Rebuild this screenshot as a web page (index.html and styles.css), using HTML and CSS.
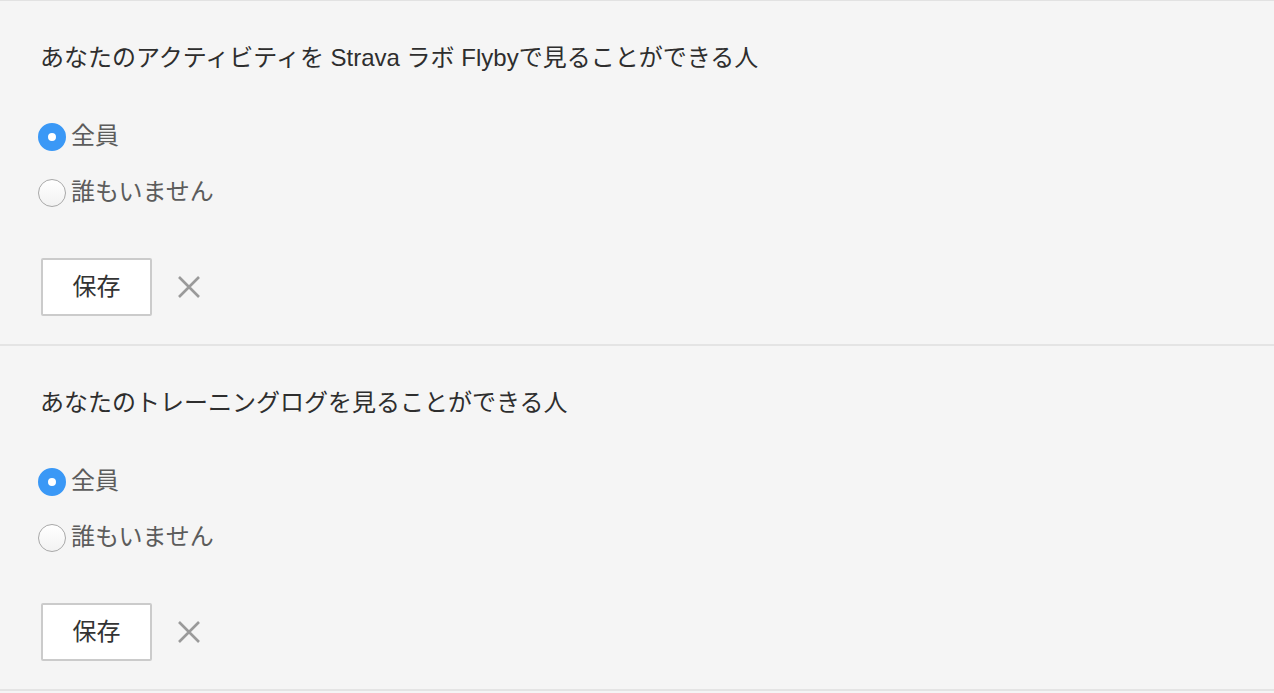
FILE: index.html
```html
<!DOCTYPE html>
<html lang="ja">
<head>
<meta charset="utf-8">
<title>プライバシー設定</title>
<link rel="stylesheet" href="styles.css">
</head>
<body>
<div class="page">
  <form class="section">
    <h2 class="title">あなたのアクティビティを Strava ラボ Flybyで見ることができる人</h2>
    <div class="options">
      <label class="option"><input type="radio" name="flyby" checked><span>全員</span></label>
      <label class="option"><input type="radio" name="flyby"><span>誰もいません</span></label>
    </div>
    <div class="actions">
      <button type="button" class="save">保存</button>
      <button type="button" class="cancel" aria-label="キャンセル">
        <svg width="24" height="24" viewBox="0 0 24 24"><path d="M2 2 L22 22 M22 2 L2 22" stroke="#9a9a9a" stroke-width="2.6" fill="none"/></svg>
      </button>
    </div>
  </form>
  <form class="section">
    <h2 class="title">あなたのトレーニングログを見ることができる人</h2>
    <div class="options">
      <label class="option"><input type="radio" name="log" checked><span>全員</span></label>
      <label class="option"><input type="radio" name="log"><span>誰もいません</span></label>
    </div>
    <div class="actions">
      <button type="button" class="save">保存</button>
      <button type="button" class="cancel" aria-label="キャンセル">
        <svg width="24" height="24" viewBox="0 0 24 24"><path d="M2 2 L22 22 M22 2 L2 22" stroke="#9a9a9a" stroke-width="2.6" fill="none"/></svg>
      </button>
    </div>
  </form>
</div>
</body>
</html>
```
FILE: styles.css
```css
html, body {
  margin: 0;
  padding: 0;
  background: #f5f5f5;
}
body {
  font-family: "Liberation Sans", "Noto Sans CJK JP", sans-serif;
  color: #333;
}
.page {
  border-top: 1px solid #e2e2e2;
}
.section {
  margin: 0;
  padding: 42px 40px 28px;
  border-bottom: 2px solid #e4e4e4;
}
.title {
  margin: 0;
  font-size: 24px;
  font-weight: normal;
  line-height: 30px;
  color: #2e2e2e;
}
.options {
  margin-top: 34px;
  display: flex;
  flex-direction: column;
}
.option {
  box-sizing: border-box;
  height: 56px;
  padding-bottom: 4px;
  display: flex;
  align-items: center;
  font-size: 24px;
  color: #5c5c5c;
  cursor: pointer;
}
.option input {
  -webkit-appearance: none;
  appearance: none;
  box-sizing: border-box;
  width: 28px;
  height: 28px;
  margin: 8px 5px 0 -2px;
  border-radius: 50%;
  border: 1px solid #a8a8a8;
  background: linear-gradient(#ffffff, #f2f2f2);
  flex: none;
}
.option input:checked {
  border: 10.5px solid #3a98f6;
  background: #ffffff;
}
.actions {
  margin-top: 39px;
  display: flex;
  align-items: center;
}
.save {
  box-sizing: border-box;
  width: 111px;
  height: 58px;
  margin-left: 1px;
  padding: 0 0 5px;
  background: #ffffff;
  border: 2px solid #cbcbcb;
  border-radius: 2px;
  font-family: inherit;
  font-size: 24px;
  color: #333;
}
.cancel {
  margin-left: 25px;
  padding: 0;
  border: 0;
  background: transparent;
  width: 24px;
  height: 24px;
  display: flex;
}
```
